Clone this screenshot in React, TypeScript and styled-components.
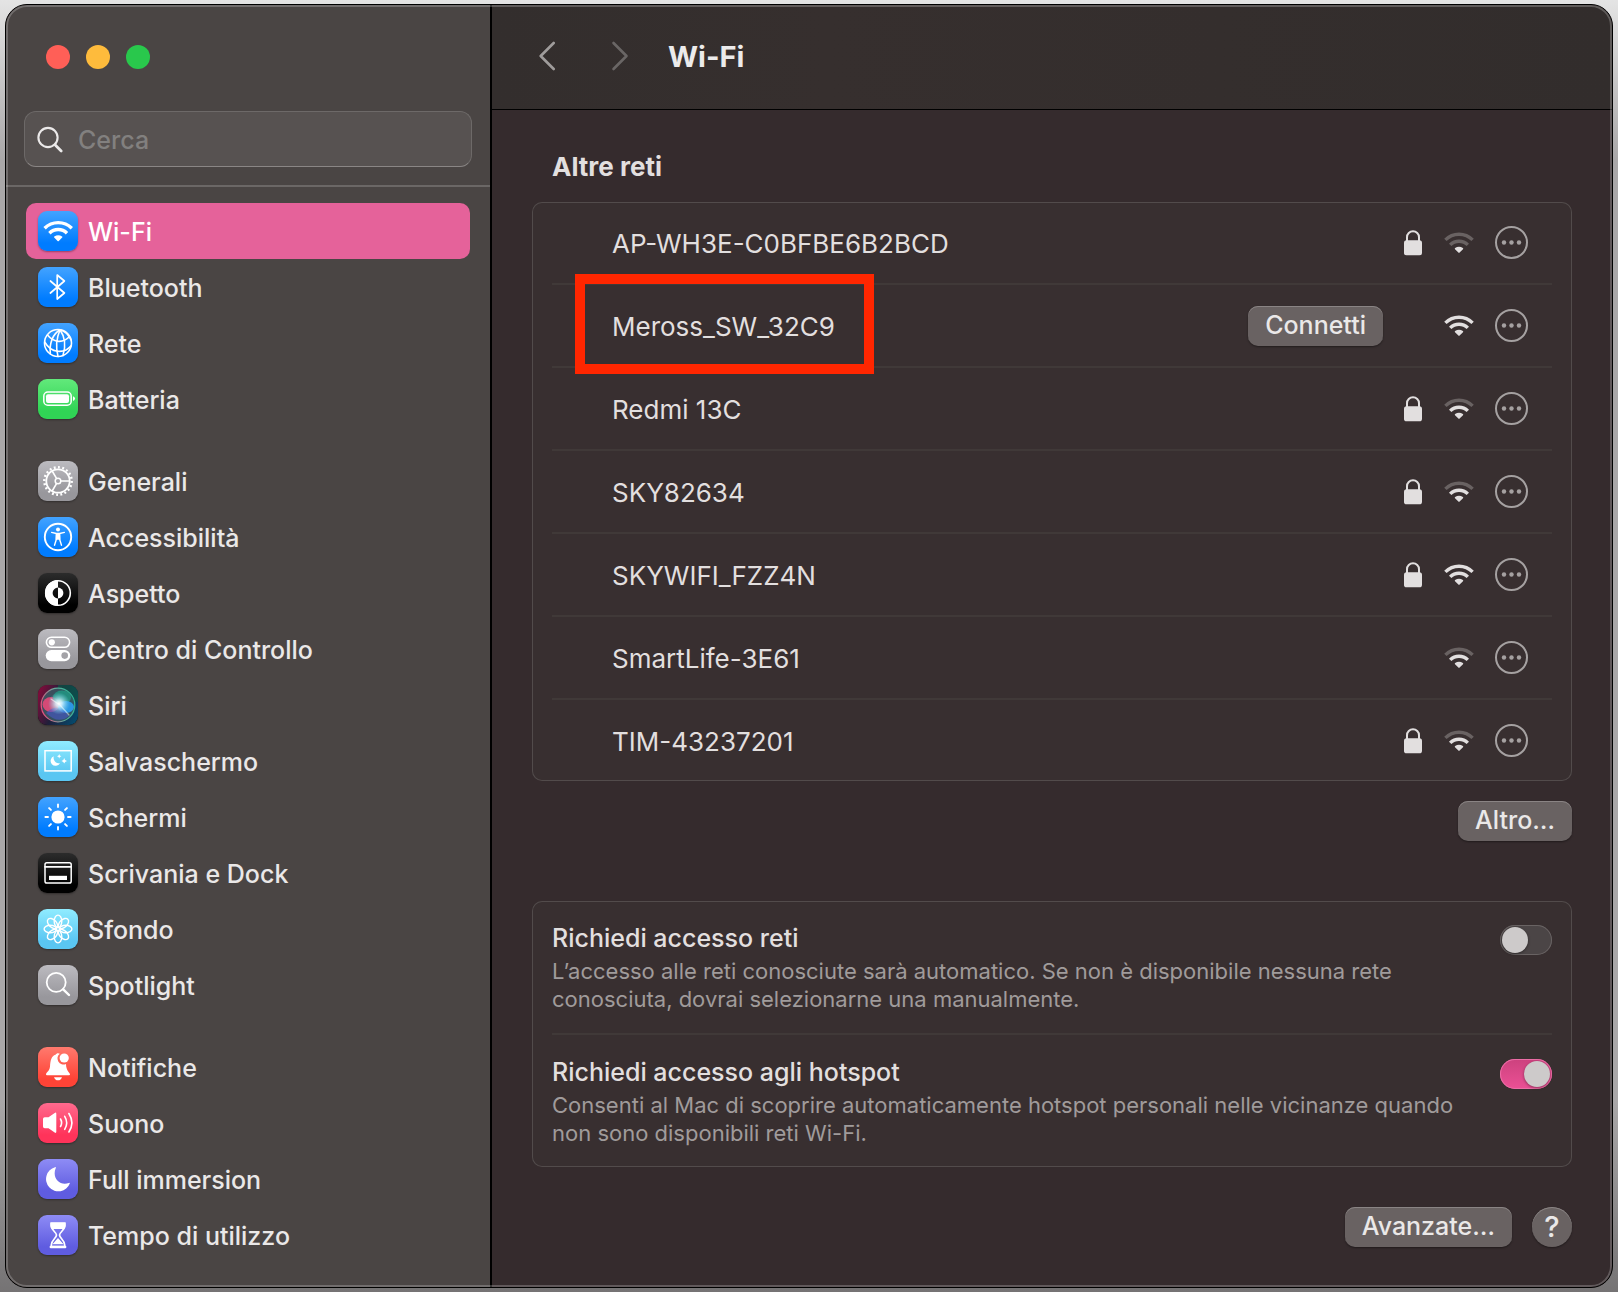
import React, { useState } from "react";
import styled, { createGlobalStyle, css } from "styled-components";

const GlobalStyle = createGlobalStyle`
  *, *::before, *::after { box-sizing: border-box; }
  body {
    margin: 0;
    font-family: Inter, "Liberation Sans", sans-serif;
    background: linear-gradient(180deg, #e4e4e4 0, #a9a7a8 160px, #a9a7a8 1100px, #757374 100%);
    color: #e2dfdf;
  }
  button, input { font: inherit; color: inherit; }
  h1, h2, p, ul { margin: 0; padding: 0; }
  ul { list-style: none; }
`;

const Desktop = styled.div`
  min-height: 100vh;
  display: flex;
  padding: 4px 5px;
`;

const Window = styled.div`
  position: relative;
  flex: 1;
  min-width: 0;
  display: grid;
  grid-template-columns: 486px minmax(0, 1fr);
  border: 1px solid #000;
  border-radius: 22px;
  overflow: hidden;
  background: #352b2d;

  &::after {
    content: "";
    position: absolute;
    inset: 0;
    border: 2px solid rgba(255, 255, 255, 0.22);
    border-radius: 21px;
    pointer-events: none;
  }
`;

const Sidebar = styled.aside`
  background: #4a4544;
  border-right: 2px solid #000;
  padding-bottom: 24px;
`;

const TrafficLights = styled.div`
  display: flex;
  gap: 16px;
  padding: 40px 40px 42px;
`;

const Light = styled.button<{ $color: string }>`
  width: 24px;
  height: 24px;
  padding: 0;
  border: 0;
  border-radius: 50%;
  background: ${(p) => p.$color};
`;

const SearchBox = styled.label`
  display: flex;
  align-items: center;
  gap: 14px;
  height: 56px;
  margin: 0 18px 18px;
  padding: 2px 11px 0;
  border: 1px solid #6d6968;
  border-bottom-color: #8a8685;
  border-radius: 12px;
  background: #575251;
`;

const SearchInput = styled.input`
  flex: 1;
  min-width: 0;
  padding: 0;
  border: 0;
  outline: 0;
  background: transparent;
  font-size: 25px;
  line-height: 32px;
  font-weight: 500;
  &::placeholder { color: #82807f; opacity: 1; }
`;

const NavArea = styled.nav`
  display: flex;
  flex-direction: column;
  gap: 26px;
  padding: 16px 20px 0;
  border-top: 2px solid #6b6766;
`;

const NavLink = styled.a<{ $active?: boolean }>`
  display: flex;
  align-items: center;
  gap: 10px;
  height: 56px;
  padding: 0 12px;
  border-radius: 10px;
  font-size: 25px;
  line-height: 32px;
  font-weight: 480;
  color: #eae8e8;
  text-decoration: none;
  ${(p) => p.$active && css`
    background: #e5629a;
    color: #fff;
  `}
`;

const NavLabel = styled.span`
  padding-top: 2px;
`;

const Tile = styled.span<{ $from: string; $to: string }>`
  flex: none;
  width: 40px;
  height: 40px;
  border-radius: 9px;
  background: linear-gradient(180deg, ${(p) => p.$from}, ${(p) => p.$to} 80%);
  box-shadow: 0 1px 2px rgba(0, 0, 0, 0.35);
  overflow: hidden;
  svg { display: block; }
`;

const Pane = styled.section`
  display: flex;
  flex-direction: column;
  min-width: 0;
`;

const Toolbar = styled.header`
  display: flex;
  align-items: center;
  gap: 32px;
  height: 105px;
  padding: 0 40px 2px;
  border-bottom: 1px solid #000;
  background: linear-gradient(90deg, #332e2d, #362f2e 30%, #322d2c);
`;

const History = styled.div`
  display: flex;
  gap: 40px;
`;

const NavArrow = styled.button`
  display: grid;
  place-items: center;
  width: 32px;
  height: 40px;
  padding: 0;
  border: 0;
  background: none;
  color: #9f9c9b;
  &:disabled { color: #6a6665; }
`;

const Title = styled.h1`
  && { padding-top: 2px; }
  font-size: 29px;
  line-height: 36px;
  font-weight: 700;
  color: #ecebeb;
`;

const Content = styled.main`
  padding: 41px 40px 40px;
`;

const SectionTitle = styled.h2`
  && { padding: 0 20px 19px; }
  font-size: 26px;
  line-height: 32px;
  font-weight: 650;
`;

const Card = styled.ul`
  && { padding: 0 20px; }
  border-radius: 10px;
  background: #382f30;
  box-shadow: inset 0 0 0 1px #524b4b;
`;

const rowDivider = css`
  &:not(:last-child) { border-bottom: 2px solid #403938; }
`;

const NetworkRow = styled.li`
  display: grid;
  grid-template-columns: minmax(0, 1fr) auto 20px 32px 33px;
  align-items: center;
  column-gap: 20px;
  min-height: 83px;
  padding: 0 24px 0 60px;
  font-size: 26px;
  line-height: 32px;
  ${rowDivider}
  &:last-child { min-height: 81px; }
`;

const NetworkName = styled.span`
  position: relative;
  justify-self: start;
  padding-top: 2px;
`;

const Highlight = styled.span`
  position: absolute;
  left: -37px;
  top: -35px;
  width: 299px;
  height: 100px;
  border: 10px solid #ff2600;
  pointer-events: none;
`;

const PushButton = styled.button`
  height: 40px;
  padding: 0 17px 2px;
  border: 0;
  border-radius: 10px;
  background: #696262;
  box-shadow: inset 0 1px 0 #8a8484, 0 1px 2px rgba(0, 0, 0, 0.4);
  color: #eae8e8;
  font-size: 25px;
  line-height: 32px;
  font-weight: 480;
`;

const ConnectCell = styled.span`
  grid-column: 2;
  display: flex;
`;

const StatusIcon = styled.span<{ $column: number }>`
  grid-column: ${(p) => p.$column};
  display: flex;
  justify-content: center;
`;

const MoreButton = styled.button`
  grid-column: 5;
  display: flex;
  padding: 0;
  border: 0;
  background: none;
  color: #a5a1a1;
`;

const Actions = styled.div<{ $top: number; $bottom: number }>`
  display: flex;
  justify-content: flex-end;
  gap: 20px;
  padding: ${(p) => p.$top}px 0 ${(p) => p.$bottom}px;
`;

const HelpButton = styled(PushButton)`
  width: 40px;
  padding: 0;
  border-radius: 50%;
  font-size: 29px;
`;

const SettingRow = styled.li`
  display: flex;
  justify-content: space-between;
  align-items: flex-start;
  gap: 32px;
  padding: 20px 0;
  ${rowDivider}
`;

const SettingText = styled.div`
  display: flex;
  flex-direction: column;
  gap: 2px;
`;

const SettingLabel = styled.label`
  font-size: 25px;
  line-height: 34px;
  font-weight: 480;
`;

const SettingHint = styled.p`
  max-width: 920px;
  font-size: 22px;
  line-height: 28px;
  font-weight: 430;
  color: #a09b9b;
`;

const Switch = styled.input`
  appearance: none;
  flex: none;
  display: flex;
  width: 52px;
  height: 30px;
  margin: 4px 0 0;
  padding: 2px;
  border-radius: 15px;
  background: #4b4546;
  box-shadow: inset 0 0 0 1px #696363;

  &::before {
    content: "";
    width: 26px;
    height: 26px;
    border-radius: 50%;
    background: #cdcaca;
    box-shadow: 0 1px 3px rgba(0, 0, 0, 0.4);
  }

  &:checked {
    justify-content: flex-end;
    background: linear-gradient(180deg, #cc427e, #ec5095);
    box-shadow: inset 0 0 0 1px #ec6ea6;
  }
`;

const line = { fill: "none", stroke: "currentColor", strokeLinecap: "round" as const, strokeLinejoin: "round" as const };

function WifiBars({ level }: { level: number }) {
  const dim = "#696262";
  const on = "currentColor";
  return (
    <>
      <path d="M1.4 7.9A19.3 19.3 0 0 1 28.6 7.9" fill="none" stroke={level > 2 ? on : dim} strokeWidth="3.4" />
      <path d="M6.2 12.9A12.4 12.4 0 0 1 23.8 12.9" fill="none" stroke={level > 1 ? on : dim} strokeWidth="3.4" />
      <path d="M15.6 20.6 19 17.3Q19.6 16.6 18.9 16.1Q15 13.6 11.1 16.1Q10.4 16.6 11 17.3L14.4 20.6Q15 21.2 15.6 20.6Z" fill={on} />
    </>
  );
}

function WifiSignal({ level }: { level: number }) {
  return (
    <svg width="30" height="22" viewBox="0 0 30 22" aria-hidden="true">
      <WifiBars level={level} />
    </svg>
  );
}

function LockIcon() {
  return (
    <svg width="18" height="26" viewBox="0 0 18 26" aria-hidden="true">
      <rect x="0" y="10.3" width="18" height="15" rx="2.6" fill="currentColor" />
      <path d="M3 12V7.2a6 6 0 0 1 12 0V12" fill="none" stroke="currentColor" strokeWidth="2" />
    </svg>
  );
}

function MoreIcon() {
  return (
    <svg width="33" height="33" viewBox="0 0 33 33" aria-hidden="true">
      <circle cx="16.5" cy="16.5" r="15.5" fill="none" stroke="currentColor" strokeWidth="2" />
      <circle cx="9" cy="16.5" r="2.2" fill="currentColor" />
      <circle cx="16.5" cy="16.5" r="2.2" fill="currentColor" />
      <circle cx="24" cy="16.5" r="2.2" fill="currentColor" />
    </svg>
  );
}

function SearchIcon() {
  return (
    <svg width="28" height="28" viewBox="0 0 28 28" aria-hidden="true" color="#ebe9e9">
      <circle cx="12" cy="11.5" r="9.6" {...line} strokeWidth="2.1" />
      <path d="M19 18.8 25.2 25" {...line} strokeWidth="2.8" />
    </svg>
  );
}

const spokes = [0, 45, 90, 135, 180, 225, 270, 315];

const glyphs: Record<string, React.ReactNode> = {
  wifi: <g transform="translate(5.2 9.3)"><WifiBars level={3} /></g>,
  bluetooth: <path d="M12.4 14 26.4 26 19.2 32V8L26.4 14 12.4 26" {...line} strokeWidth="1.7" />,
  network: (
    <g {...line} strokeWidth="1.6">
      <circle cx="20" cy="20" r="13.5" />
      <path d="M22 6.8C15 11 11 20 12.4 31" />
      <path d="M22 6.8C18.5 15 17.5 24 20 33.4" />
      <path d="M22 6.8C27 14 28 23 25 32.4" />
      <path d="M22 6.8C27 8 31 13 33 17" />
      <path d="M9.5 12C16 20 25 20.5 31.5 13.5" />
      <path d="M6.7 19C13 30 26 31.5 33.3 22.5" />
    </g>
  ),
  battery: (
    <>
      <rect x="5.8" y="13" width="27.4" height="13.2" rx="4" {...line} strokeWidth="1.5" />
      <rect x="8" y="15.2" width="23" height="8.8" rx="2" fill="currentColor" />
      <path d="M35 17.2Q37 17.8 37 19.6T35 22Z" fill="currentColor" />
    </>
  ),
  general: (
    <g {...line} strokeLinecap="butt">
      <circle cx="20" cy="20" r="11.7" strokeWidth="1.8" />
      <circle cx="20" cy="20" r="13.7" strokeWidth="2.4" pathLength="200" strokeDasharray="4.4 5.6" />
      <circle cx="20" cy="20" r="2.8" strokeWidth="1.5" />
      <path d="M23 20H31.5M18.5 17.4 14.2 10M18.5 22.6 14.2 30" strokeWidth="1.6" />
    </g>
  ),
  accessibility: (
    <>
      <circle cx="20" cy="20" r="13.2" {...line} strokeWidth="1.9" />
      <circle cx="20" cy="12.6" r="2" fill="currentColor" />
      <path d="M13.6 15.4 18.3 16.5H21.7L26.4 15.4M18.5 17.5 18.3 22.5 16.5 28.2M21.5 17.5 21.7 22.5 23.5 28.2" {...line} strokeWidth="1.4" />
      <path d="M17.8 16.5H22.2L22.4 22.8H17.6Z" fill="currentColor" />
    </>
  ),
  appearance: (
    <>
      <circle cx="20" cy="20" r="12.3" {...line} strokeWidth="1.6" />
      <path d="M20 7A13 13 0 0 0 20 33V25.4A5.4 5.4 0 0 1 20 14.6Z" fill="currentColor" />
      <path d="M20 14.6A5.4 5.4 0 0 1 20 25.4Z" fill="currentColor" />
    </>
  ),
  control: (
    <>
      <rect x="8.4" y="8.3" width="23.2" height="10" rx="5" {...line} strokeWidth="1.6" />
      <circle cx="13.8" cy="13.3" r="3.1" fill="currentColor" />
      <rect x="7.7" y="21" width="24.6" height="11.2" rx="5.6" fill="currentColor" />
      <circle cx="26.7" cy="26.6" r="3.3" fill="#a3a2a7" />
    </>
  ),
  siri: (
    <>
      <defs>
        <linearGradient id="siriBase" x1="0" y1="0.3" x2="1" y2="0.7">
          <stop offset="0" stopColor="#7a0d3a" />
          <stop offset="0.45" stopColor="#1f1f3a" />
          <stop offset="1" stopColor="#06486b" />
        </linearGradient>
        <radialGradient id="siriGlow">
          <stop offset="0" stopColor="#fff" />
          <stop offset="0.3" stopColor="#d8f6ff" stopOpacity="0.85" />
          <stop offset="1" stopColor="#6fd8f0" stopOpacity="0" />
        </radialGradient>
        <linearGradient id="siriRing" x1="0" y1="0.6" x2="1" y2="0.3">
          <stop offset="0" stopColor="#e0527e" />
          <stop offset="0.55" stopColor="#5fae9c" />
          <stop offset="1" stopColor="#27b090" />
        </linearGradient>
      </defs>
      <rect width="40" height="40" fill="url(#siriBase)" />
      <path d="M20 0H40V17L20 14Z" fill="#0d5546" opacity="0.7" />
      <circle cx="20" cy="20" r="16.5" fill="#3a5c66" opacity="0.8" />
      <ellipse cx="13" cy="19.5" rx="8.5" ry="7.5" fill="#ee4a7a" opacity="0.85" />
      <ellipse cx="24" cy="12.5" rx="9" ry="7" fill="#1fa28a" opacity="0.7" />
      <ellipse cx="28" cy="22" rx="8" ry="6" fill="#2b9ff0" opacity="0.9" />
      <path d="M8 28Q20 16 31 31Q20 40 8 28Z" fill="#4a58c8" opacity="0.6" />
      <circle cx="21" cy="18.5" r="11" fill="url(#siriGlow)" />
      <path d="M13 14 22 20 31 30" {...line} stroke="#fff" strokeWidth="1.2" opacity="0.5" />
      <circle cx="20" cy="20" r="16.8" fill="none" stroke="url(#siriRing)" strokeWidth="1.3" />
    </>
  ),
  screensaver: (
    <>
      <rect x="7" y="9.7" width="26.2" height="20.2" {...line} strokeLinejoin="miter" strokeWidth="1.5" />
      <path d="M15.8 15.2A5 5 0 1 0 22 22.3A5.6 5.6 0 0 1 15.8 15.2Z" fill="currentColor" />
      <path d="M21.2 13Q21.4 15 23.4 15.3Q21.4 15.6 21.2 17.6Q21 15.6 19 15.3Q21 15 21.2 13ZM26.2 17Q26.5 19.5 29 19.9Q26.5 20.3 26.2 22.8Q25.9 20.3 23.4 19.9Q25.9 19.5 26.2 17Z" fill="currentColor" />
    </>
  ),
  display: (
    <>
      <circle cx="20" cy="20" r="6.6" fill="currentColor" />
      {spokes.map((a) => (
        <path key={a} d="M20 7.4V10" transform={`rotate(${a} 20 20)`} {...line} strokeWidth="1.9" />
      ))}
    </>
  ),
  dock: (
    <>
      <rect x="7" y="9.8" width="26.2" height="20.2" rx="1.8" {...line} strokeWidth="1.5" />
      <path d="M7 13.8H33" {...line} strokeWidth="1.7" />
      <rect x="11" y="22.8" width="18" height="4.2" fill="currentColor" />
    </>
  ),
  wallpaper: (
    <>
      {spokes.map((a) => (
        <ellipse key={a} cx="20" cy="12.3" rx="3.8" ry="6.2" transform={`rotate(${a} 20 20)`} {...line} strokeWidth="1.4" />
      ))}
    </>
  ),
  spotlight: (
    <>
      <circle cx="18.2" cy="17.3" r="9.5" {...line} strokeWidth="1.8" />
      <path d="M25.2 24.3 31 30" {...line} strokeWidth="2.4" />
    </>
  ),
  notifications: (
    <>
      <path d="M8 27.3C8 25.5 11.5 24.5 12 19.5C12.4 13 13.5 9 17.5 7.7C18.4 6 20.5 5.7 21.8 6.7A6 6 0 0 0 28 16.9C28.1 24 32 25.5 32 27.3Q32 28.3 31 28.3H9Q8 28.3 8 27.3Z" fill="currentColor" />
      <circle cx="26.2" cy="11" r="4.6" fill="currentColor" />
      <path d="M16 30.2H24Q23 33.3 20 33.3T16 30.2Z" fill="currentColor" />
    </>
  ),
  sound: (
    <>
      <path d="M5 16Q5 14.3 6.7 14.3H10.5L16.7 9.9Q18.3 9 18.3 10.8V28.8Q18.3 30.6 16.7 29.6L10.5 25.2H6.7Q5 25.2 5 23.5Z" fill="currentColor" />
      <path d="M22.5 16Q24.7 19.8 22.5 23.5M26.7 13.3Q30.7 19.8 26.7 26.3M30.9 10.5Q36.9 19.8 30.9 29" {...line} strokeWidth="1.6" />
    </>
  ),
  focus: <path d="M17 8.2A12.3 12.3 0 1 0 31.8 24.5Q32 23.3 30.8 23.9C22 27.5 13.5 18.5 17.8 9Q18.3 7.7 17 8.2Z" fill="currentColor" />,
  screentime: (
    <>
      <path d="M13.3 8.5H26.7V10.5C26.7 16 21.5 17 21.5 20S26.7 25 26.7 30V31.5H13.3V30C13.3 25 18.5 23 18.5 20S13.3 16 13.3 10.5Z" {...line} strokeWidth="1.7" />
      <path d="M12.3 7.3H27.7V11C27.5 12.5 27 13.5 26 14H14C13 13.5 12.5 12.5 12.3 11Z" fill="currentColor" />
      <path d="M20 23 25.6 29.3H14.4Z" fill="currentColor" />
      <path d="M12.8 32H27.2" {...line} strokeWidth="2.4" />
    </>
  ),
};

const palette = {
  blue: ["#43a3ff", "#007cff"],
  green: ["#62e97b", "#30d455"],
  gray: ["#bcbbc0", "#98979c"],
  black: ["#2c2c2c", "#000000"],
  cyan: ["#90ecff", "#5ac6f2"],
  red: ["#ff7a6e", "#ff4336"],
  rose: ["#ff6a8e", "#ff335a"],
  indigo: ["#8e8cf5", "#5f5ce0"],
} as const;

type NavItem = { label: string; icon: string; tone: keyof typeof palette };

const groups: NavItem[][] = [
  [
    { label: "Wi-Fi", icon: "wifi", tone: "blue" },
    { label: "Bluetooth", icon: "bluetooth", tone: "blue" },
    { label: "Rete", icon: "network", tone: "blue" },
    { label: "Batteria", icon: "battery", tone: "green" },
  ],
  [
    { label: "Generali", icon: "general", tone: "gray" },
    { label: "Accessibilità", icon: "accessibility", tone: "blue" },
    { label: "Aspetto", icon: "appearance", tone: "black" },
    { label: "Centro di Controllo", icon: "control", tone: "gray" },
    { label: "Siri", icon: "siri", tone: "black" },
    { label: "Salvaschermo", icon: "screensaver", tone: "cyan" },
    { label: "Schermi", icon: "display", tone: "blue" },
    { label: "Scrivania e Dock", icon: "dock", tone: "black" },
    { label: "Sfondo", icon: "wallpaper", tone: "cyan" },
    { label: "Spotlight", icon: "spotlight", tone: "gray" },
  ],
  [
    { label: "Notifiche", icon: "notifications", tone: "red" },
    { label: "Suono", icon: "sound", tone: "rose" },
    { label: "Full immersion", icon: "focus", tone: "indigo" },
    { label: "Tempo di utilizzo", icon: "screentime", tone: "indigo" },
  ],
];

type Network = { name: string; locked: boolean; level: number; hovered?: boolean };

const networks: Network[] = [
  { name: "AP-WH3E-C0BFBE6B2BCD", locked: true, level: 1 },
  { name: "Meross_SW_32C9", locked: false, level: 3, hovered: true },
  { name: "Redmi 13C", locked: true, level: 2 },
  { name: "SKY82634", locked: true, level: 2 },
  { name: "SKYWIFI_FZZ4N", locked: true, level: 3 },
  { name: "SmartLife-3E61", locked: false, level: 2 },
  { name: "TIM-43237201", locked: true, level: 2 },
];

const settings = [
  {
    id: "ask-networks",
    label: "Richiedi accesso reti",
    hint: "L’accesso alle reti conosciute sarà automatico. Se non è disponibile nessuna rete conosciuta, dovrai selezionarne una manualmente.",
    on: false,
  },
  {
    id: "ask-hotspots",
    label: "Richiedi accesso agli hotspot",
    hint: "Consenti al Mac di scoprire automaticamente hotspot personali nelle vicinanze quando non sono disponibili reti Wi-Fi.",
    on: true,
  },
];

function SettingItem({ id, label, hint, on }: (typeof settings)[number]) {
  const [checked, setChecked] = useState(on);
  return (
    <SettingRow>
      <SettingText>
        <SettingLabel htmlFor={id}>{label}</SettingLabel>
        <SettingHint>{hint}</SettingHint>
      </SettingText>
      <Switch id={id} type="checkbox" role="switch" checked={checked} onChange={(e) => setChecked(e.target.checked)} />
    </SettingRow>
  );
}

export default function App() {
  return (
    <Desktop>
      <GlobalStyle />
      <Window>
        <Sidebar>
          <TrafficLights>
            <Light $color="#ff5f57" aria-label="Chiudi" />
            <Light $color="#febb3c" aria-label="Riduci" />
            <Light $color="#29c84c" aria-label="Ingrandisci" />
          </TrafficLights>
          <SearchBox>
            <SearchIcon />
            <SearchInput type="text" placeholder="Cerca" aria-label="Cerca" />
          </SearchBox>
          <NavArea>
            {groups.map((items, g) => (
              <ul key={g}>
                {items.map(({ label, icon, tone }) => (
                  <li key={icon}>
                    <NavLink href={`#${icon}`} $active={icon === "wifi"}>
                      <Tile $from={palette[tone][0]} $to={palette[tone][1]}>
                        <svg width="40" height="40" viewBox="0 0 40 40" color="#fff" aria-hidden="true">
                          {glyphs[icon]}
                        </svg>
                      </Tile>
                      <NavLabel>{label}</NavLabel>
                    </NavLink>
                  </li>
                ))}
              </ul>
            ))}
          </NavArea>
        </Sidebar>

        <Pane>
          <Toolbar>
            <History>
              <NavArrow aria-label="Indietro">
                <svg width="18" height="30" viewBox="0 0 18 30">
                  <path d="M14.7 2 1.7 15 14.7 28" {...line} strokeWidth="2.6" />
                </svg>
              </NavArrow>
              <NavArrow aria-label="Avanti" disabled>
                <svg width="18" height="30" viewBox="0 0 18 30">
                  <path d="M2.5 2 15.5 15 2.5 28" {...line} strokeWidth="2.6" />
                </svg>
              </NavArrow>
            </History>
            <Title>Wi-Fi</Title>
          </Toolbar>

          <Content>
            <SectionTitle>Altre reti</SectionTitle>
            <Card>
              {networks.map((n) => (
                <NetworkRow key={n.name}>
                  <NetworkName>
                    {n.name}
                    {n.hovered && <Highlight />}
                  </NetworkName>
                  {n.hovered && (
                    <ConnectCell>
                      <PushButton>Connetti</PushButton>
                    </ConnectCell>
                  )}
                  {n.locked && (
                    <StatusIcon $column={3}>
                      <LockIcon />
                    </StatusIcon>
                  )}
                  <StatusIcon $column={4}>
                    <WifiSignal level={n.level} />
                  </StatusIcon>
                  <MoreButton aria-label={`Altre opzioni per ${n.name}`}>
                    <MoreIcon />
                  </MoreButton>
                </NetworkRow>
              ))}
            </Card>
            <Actions $top={20} $bottom={60}>
              <PushButton>Altro…</PushButton>
            </Actions>

            <Card>
              {settings.map((s) => (
                <SettingItem key={s.id} {...s} />
              ))}
            </Card>
            <Actions $top={40} $bottom={0}>
              <PushButton>Avanzate…</PushButton>
              <HelpButton aria-label="Aiuto">?</HelpButton>
            </Actions>
          </Content>
        </Pane>
      </Window>
    </Desktop>
  );
}
